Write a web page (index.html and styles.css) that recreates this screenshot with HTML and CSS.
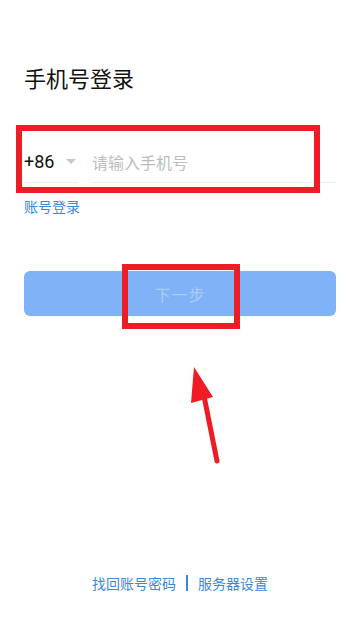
FILE: index.html
```html
<!DOCTYPE html>
<html lang="zh">
<head>
<meta charset="utf-8">
<link rel="stylesheet" href="styles.css">
</head>
<body>
<div class="page">
  <h1 class="title">手机号登录</h1>
  <div class="phone-row">
    <div class="prefix"><span class="code">+86</span><span class="caret"></span></div>
    <div class="input">请输入手机号</div>
  </div>
  <a class="alt-link">账号登录</a>
  <div class="btn">下一步</div>
  <div class="footer">
    <a class="link">找回账号密码</a>
    <span class="sep"></span>
    <a class="link">服务器设置</a>
  </div>
</div>
<div class="mark mark-input"></div>
<div class="mark mark-btn"></div>
<svg class="arrow" width="360" height="618" viewBox="0 0 360 618">
  <line x1="204" y1="396" x2="217" y2="461" stroke="#ee1c25" stroke-width="5" stroke-linecap="round"/>
  <polygon points="194,367 191,403 213,397" fill="#ee1c25"/>
</svg>
</body>
</html>
```
FILE: styles.css
```css
html, body { margin: 0; padding: 0; background: #fff; }
body {
  font-family: "Noto Sans CJK SC", "Noto Sans", sans-serif;
  width: 360px; height: 618px; position: relative; overflow: hidden;
}
.page {
  display: flex; flex-direction: column;
  height: 618px; box-sizing: border-box;
  padding: 0 24px 16px 24px;
}
.title {
  margin: 62px 0 0 0;
  font-size: 22px; font-weight: 400; line-height: 30px; color: #111;
}
.phone-row {
  display: flex; gap: 13px; margin-top: 47px; height: 44px;
}
.prefix {
  width: 54px; display: flex; align-items: center; justify-content: space-between;
  padding-top: 2px;
  border-bottom: 1px solid #eeeeee; box-sizing: border-box;
}
.code { font-family: "Roboto", "Noto Sans", sans-serif; font-size: 18px; color: #111; }
.caret {
  width: 0; height: 0; margin-right: 2px;
  border-left: 5px solid transparent; border-right: 5px solid transparent;
  border-top: 5px solid #c8c8c8;
}
.input {
  flex: 1; display: flex; align-items: center; padding-left: 1px; padding-top: 2px;
  font-size: 16px; color: #bdbdbd;
  border-bottom: 1px solid #eeeeee; box-sizing: border-box;
}
.alt-link {
  margin-top: 13px; font-size: 14px; line-height: 20px; color: #3d87d8;
}
.btn {
  margin-top: 55px; height: 45px; border-radius: 6px;
  background: #7fb2f6; color: #acccf8;
  display: flex; align-items: center; justify-content: center;
  font-size: 16px; letter-spacing: 1px;
}
.footer {
  margin-top: auto; display: flex; align-items: center; justify-content: center;
  gap: 10px; font-size: 14px; line-height: 20px; color: #3d87d8;
  padding-bottom: 9px;
}
.sep { width: 2px; height: 16px; background: #3d87d8; }
.mark {
  position: absolute; border: 6px solid #ee1c25; box-sizing: border-box;
}
.mark-input { left: 16px; top: 125px; width: 304px; height: 68px; }
.mark-btn { left: 122px; top: 264px; width: 118px; height: 65px; }
.arrow { position: absolute; left: 0; top: 0; }
```
